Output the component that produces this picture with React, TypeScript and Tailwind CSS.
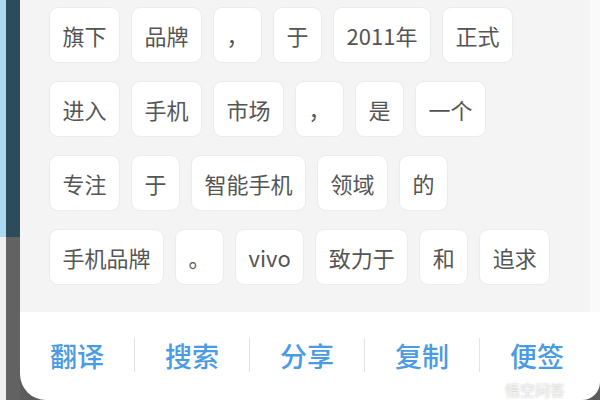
import React from 'react'

const rows: string[][] = [
  ['旗下', '品牌', '，', '于', '2011年', '正式'],
  ['进入', '手机', '市场', '，', '是', '一个'],
  ['专注', '于', '智能手机', '领域', '的'],
  ['手机品牌', '。', 'vivo', '致力于', '和', '追求'],
]

const actions = ['翻译', '搜索', '分享', '复制', '便签']

function Chip({ text }: { text: string }) {
  return (
    <div className="h-[56px] min-w-[48px] px-[12.5px] flex items-center justify-center rounded-[9px] bg-white border border-[#ebebeb] text-[22px] text-[#555] leading-none">
      {text}
    </div>
  )
}

export default function App() {
  return (
    <div
      className="w-[600px] h-[400px] flex bg-[#5c5c5c] overflow-hidden relative"
      style={{ fontFamily: '"Noto Sans CJK SC", "Noto Sans", sans-serif' }}
    >
      {/* left edge of the screen behind */}
      <div className="w-[20px] h-full flex flex-col">
        <div className="h-[237px] flex">
          <div className="w-[6px] bg-[#acd9ee]" />
          <div className="flex-1 bg-[#2c4b5b]" />
        </div>
        <div className="flex-1 flex">
          <div className="w-[6px] bg-[#eeeeee]" />
          <div className="flex-1 bg-[#626262]" />
        </div>
      </div>

      {/* popup card */}
      <div className="flex-1 h-full flex flex-col bg-white rounded-bl-[26px] rounded-br-[18px] overflow-hidden">
        <div className="h-[312px] flex bg-[#f4f4f4]">
          <div className="flex-1 pl-[29px] pt-[7px] flex flex-col gap-[18px]">
            {rows.map((row, i) => (
              <div key={i} className="flex gap-[11px]">
                {row.map((t, j) => (
                  <Chip key={j} text={t} />
                ))}
              </div>
            ))}
          </div>
          <div className="w-[10px] bg-[#fafafa]" />
        </div>
        <div className="flex-1 flex items-center pb-[2px]">
          {actions.map((a, i) => (
            <React.Fragment key={a}>
              {i > 0 && <div className="w-px h-[34px] bg-[#e3e3e3]" />}
              <div className="w-[114px] text-center text-[27px] font-medium text-[#4a9be3] leading-none">{a}</div>
            </React.Fragment>
          ))}
        </div>
      </div>

      {/* watermark */}
      <div className="absolute left-[482px] top-[382px] flex items-center gap-[5px] text-[15px] leading-none text-white/70 [text-shadow:0_0_2px_rgba(0,0,0,0.3)]">
        <svg width="18" height="14" viewBox="0 0 22 18" fill="none" stroke="rgba(255,255,255,0.8)" strokeWidth="2">
          <ellipse cx="11" cy="8" rx="9" ry="6" />
          <path d="M6 13 L4 17 L10 14" />
        </svg>
        <span>悟空问答</span>
      </div>
    </div>
  )
}
